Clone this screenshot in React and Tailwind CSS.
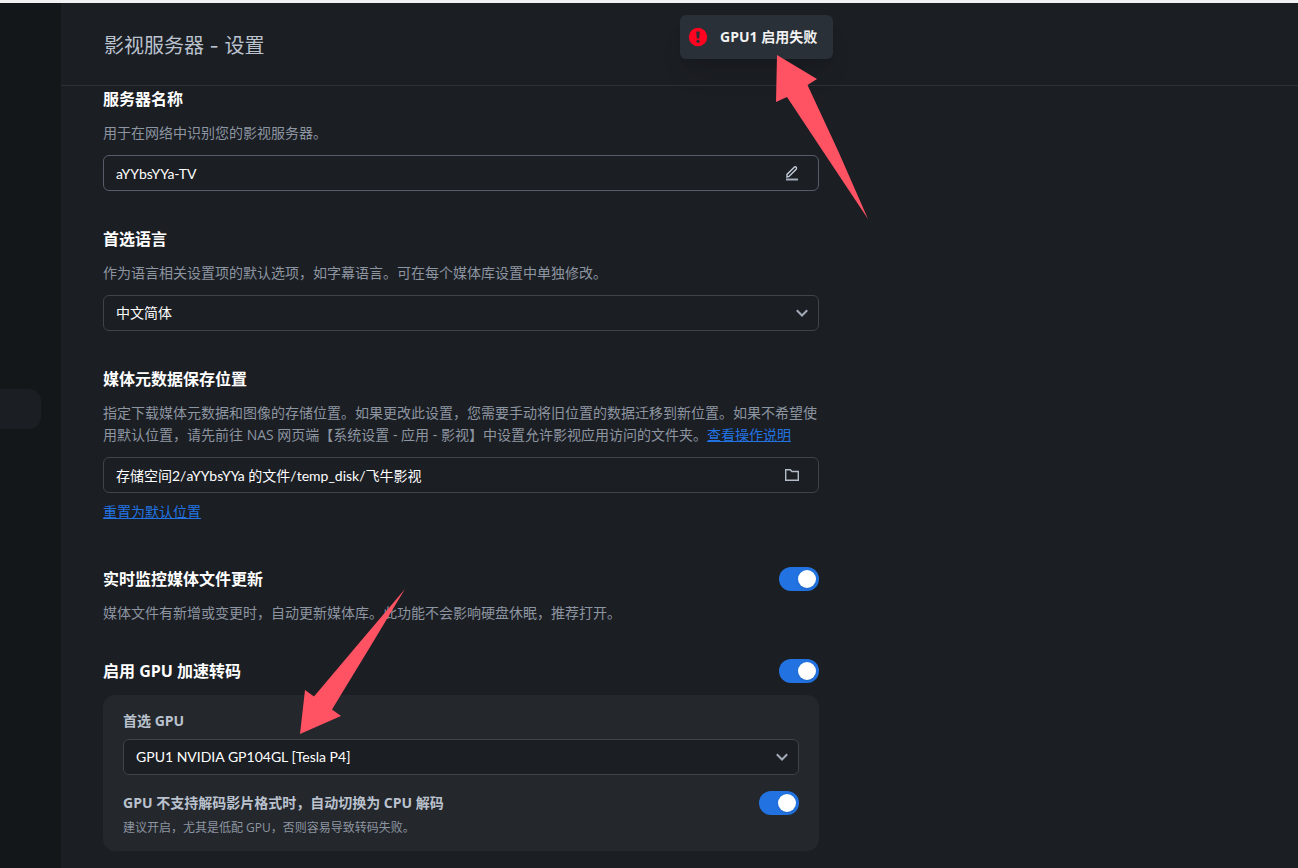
import { useState } from 'react'

const inputClass =
  "block h-9 w-full appearance-none rounded-md border bg-[#1b1e23] pl-3 pr-12 font-['Lato','Noto_Sans_CJK_SC',sans-serif] text-sm text-white outline-none"

function Switch({ label, checked, onChange }) {
  return (
    <input
      type="checkbox"
      role="switch"
      aria-label={label}
      checked={checked}
      onChange={(e) => onChange(e.target.checked)}
      className="flex h-6 w-10 shrink-0 cursor-pointer appearance-none items-center justify-start rounded-full bg-[#4a4f58] px-[3px] before:size-[18px] before:rounded-full before:bg-white before:shadow checked:justify-end checked:bg-[#2273e1]"
    />
  )
}

function Select({ id, options }) {
  return (
    <div className="relative">
      <select id={id} className={`${inputClass} border-[#3f434a]`}>
        {options.map((o) => (
          <option key={o}>{o}</option>
        ))}
      </select>
      <svg
        className="pointer-events-none absolute right-[9px] top-2.5 size-4"
        viewBox="0 0 16 16"
        fill="none"
        stroke="#a3abb8"
        strokeWidth="2"
      >
        <path d="M2.8 5.3 8 10.5l5.2-5.2" />
      </svg>
    </div>
  )
}

function TextField({ id, value, borderClass, action, children }) {
  const [text, setText] = useState(value)
  return (
    <div className="relative">
      <input
        id={id}
        type="text"
        value={text}
        onChange={(e) => setText(e.target.value)}
        className={`${inputClass} ${borderClass}`}
      />
      <button type="button" aria-label={action} className="absolute right-[18px] top-[9px] size-[18px] cursor-pointer">
        {children}
      </button>
    </div>
  )
}

function Title({ htmlFor, children }) {
  return (
    <h2 className="text-base leading-6 font-bold text-white">
      {htmlFor ? <label htmlFor={htmlFor}>{children}</label> : children}
    </h2>
  )
}

function Desc({ children }) {
  return <p className="mt-[11px] text-sm leading-[22px] text-[#8d95a1]">{children}</p>
}

function Toast({ children }) {
  return (
    <div
      role="alert"
      className="absolute left-[680px] top-[15px] flex h-11 items-center gap-3 rounded-md bg-[#293038] pl-2 pr-4 text-sm font-bold text-[#f2f2f2] shadow-xl"
    >
      <svg className="size-5" viewBox="0 0 20 20">
        <circle cx="10" cy="10" r="9.2" fill="#ff0420" />
        <path d="M8.2 4.4h3.6l-.6 7.2H8.8z" fill="#293038" />
        <circle cx="10" cy="14.3" r="1.6" fill="#293038" />
      </svg>
      {children}
    </div>
  )
}

export default function App() {
  const [watch, setWatch] = useState(true)
  const [gpu, setGpu] = useState(true)
  const [fallback, setFallback] = useState(true)

  return (
    <div
      lang="zh-CN"
      className="relative flex min-h-screen flex-col border-t-3 border-[#f0f1f2] bg-[#1b1e23] font-['Open_Sans','Noto_Sans_CJK_SC',sans-serif]"
    >
      <div className="flex flex-1">
        <nav className="w-[61px] shrink-0 bg-[#13171a] pt-[386px] pr-5">
          <a href="#settings" aria-label="设置" className="block h-10 rounded-r-xl bg-[#1b1e23]" />
        </nav>

        <main className="min-w-0 flex-1">
          <header className="flex h-[83px] items-center border-b border-[#2d3036] px-[43px] pt-1">
            <h1 className="font-['Inter','Noto_Sans_CJK_SC',sans-serif] text-xl text-[#bac2ce]">影视服务器 - 设置</h1>
          </header>

          <div className="px-[42px] pt-px pb-4">
            <div className="max-w-[716px]">
              <section>
                <Title htmlFor="server-name">服务器名称</Title>
                <Desc>用于在网络中识别您的影视服务器。</Desc>
                <div className="mt-[11px]">
                  <TextField id="server-name" value="aYYbsYYa-TV" borderClass="border-[#565c69]" action="编辑">
                    <svg viewBox="0 0 18 18" fill="none" stroke="#c3cbd8" strokeWidth="1.4">
                      <path d="M4 13v-2.600l7.200-7.200q1.200-.8 2 0t0 2l-7.200 7.200z" />
                      <path d="M3 15.500h12" strokeWidth="2" stroke="#a3abb8" />
                    </svg>
                  </TextField>
                </div>
              </section>

              <section className="mt-9">
                <Title htmlFor="language">首选语言</Title>
                <Desc>作为语言相关设置项的默认选项，如字幕语言。可在每个媒体库设置中单独修改。</Desc>
                <div className="mt-[11px]">
                  <Select id="language" options={['中文简体', 'English']} />
                </div>
              </section>

              <section className="mt-9">
                <Title htmlFor="meta-path">媒体元数据保存位置</Title>
                <Desc>
                  指定下载媒体元数据和图像的存储位置。如果更改此设置，您需要手动将旧位置的数据迁移到新位置。如果不希望使用默认位置，请先前往 NAS 网页端【系统设置 - 应用 - 影视】中设置允许影视应用访问的文件夹。
                  <a href="#help" className="text-[#2273e1] underline underline-offset-1">查看操作说明</a>
                </Desc>
                <div className="mt-[11px]">
                  <TextField
                    id="meta-path"
                    value="存储空间2/aYYbsYYa 的文件/temp_disk/飞牛影视"
                    borderClass="border-[#3f434a]"
                    action="选择文件夹"
                  >
                    <svg viewBox="0 0 18 18" fill="none" stroke="#b4bcc8" strokeWidth="1.4">
                      <path d="M2.700 3.700h4.600l1.600 1.800h6.400v8.800H2.700z" />
                    </svg>
                  </TextField>
                </div>
                <a
                  href="#reset"
                  className="mt-2 block w-fit text-sm leading-[22px] text-[#2273e1] underline underline-offset-1"
                >
                  重置为默认位置
                </a>
              </section>

              <section className="mt-11">
                <div className="flex justify-between">
                  <Title>实时监控媒体文件更新</Title>
                  <Switch label="实时监控媒体文件更新" checked={watch} onChange={setWatch} />
                </div>
                <Desc>媒体文件有新增或变更时，自动更新媒体库。此功能不会影响硬盘休眠，推荐打开。</Desc>
              </section>

              <section className="mt-[35px]">
                <div className="flex justify-between">
                  <Title>启用 GPU 加速转码</Title>
                  <Switch label="启用 GPU 加速转码" checked={gpu} onChange={setGpu} />
                </div>
                <div className="mt-3 rounded-xl bg-[#24272c] px-5 pt-4 pb-3.5">
                  <label htmlFor="gpu" className="mb-2 block text-sm leading-5 font-bold text-[#bac2ce]">
                    首选 GPU
                  </label>
                  <Select id="gpu" options={['GPU1 NVIDIA GP104GL [Tesla P4]']} />
                  <div className="mt-4 flex items-center justify-between">
                    <h3 className="text-sm leading-6 font-bold text-[#bac2ce]">
                      GPU 不支持解码影片格式时，自动切换为 CPU 解码
                    </h3>
                    <Switch label="自动切换为 CPU 解码" checked={fallback} onChange={setFallback} />
                  </div>
                  <p className="mt-1 text-xs leading-[18px] text-[#8d95a1]">
                    建议开启，尤其是低配 GPU，否则容易导致转码失败。
                  </p>
                </div>
              </section>
            </div>
          </div>
        </main>
      </div>

      <div className="absolute inset-x-0 -top-[3px]">
        <Toast>GPU1 启用失败</Toast>
        {/* marker arrows over the toast and the GPU select */}
        <svg className="pointer-events-none absolute left-[776px] top-[55px]" width="94" height="166" viewBox="0 0 94 166" fill="#ff5263">
          <path d="M1 0 41 24 31.500 30Q63 96 92 164Q50 101 11 42L0 47z" />
        </svg>
        <svg className="pointer-events-none absolute left-[300px] top-[588px]" width="106" height="148" viewBox="0 0 106 148" fill="#ff5263">
          <path d="M0 146 5 102 14 108.500Q59 55 105 1Q69 61 32 121.500L41 128z" />
        </svg>
      </div>
    </div>
  )
}
